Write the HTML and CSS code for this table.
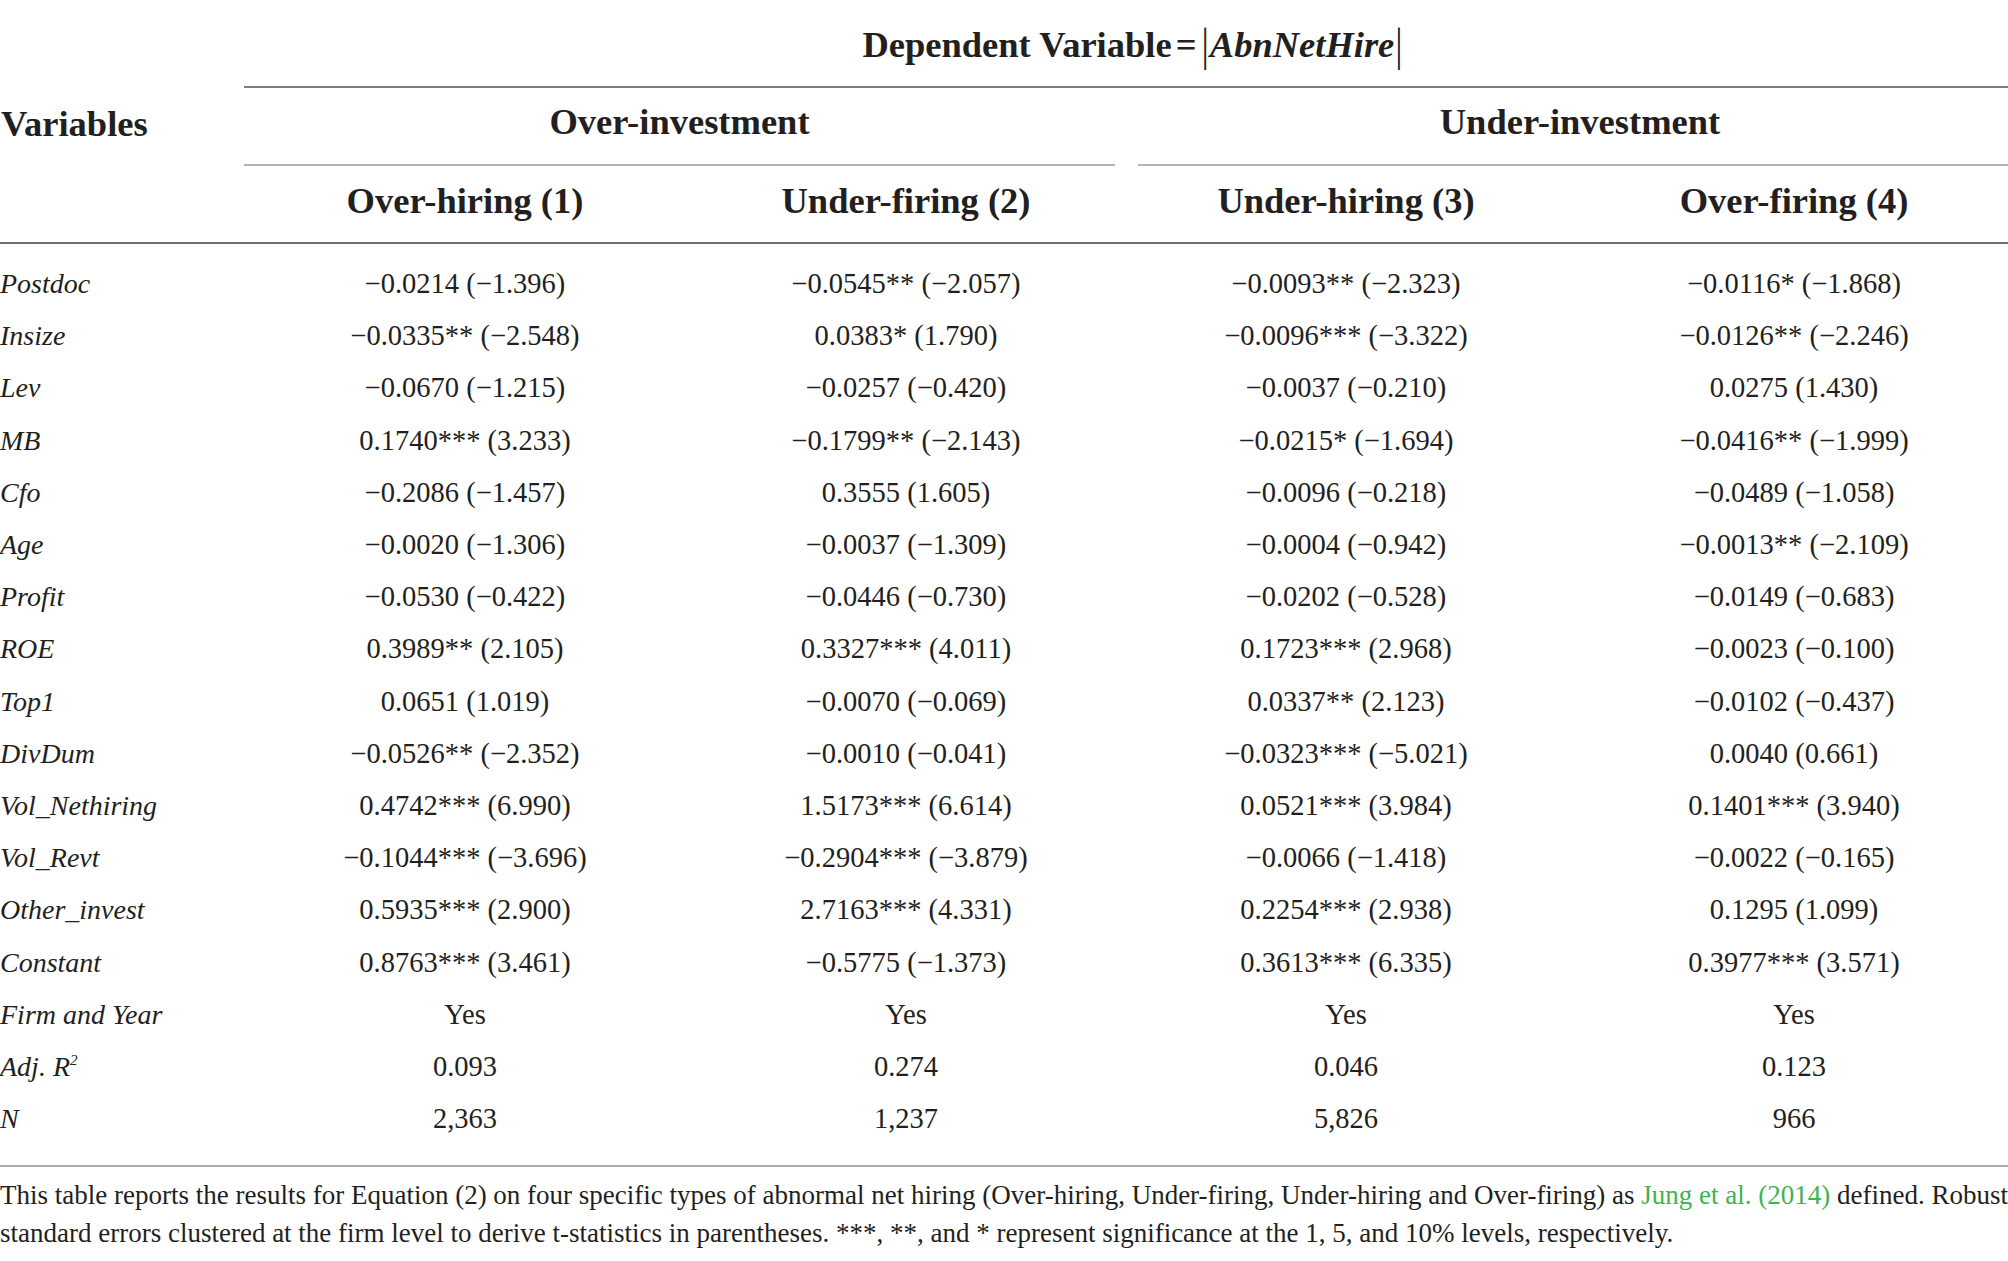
FILE: index.html
```html
<!DOCTYPE html>
<html lang="en">
<head>
<meta charset="utf-8">
<title>Table</title>
<link rel="stylesheet" href="styles.css">
</head>
<body>
<div class="page">
<table class="reg">
  <colgroup>
    <col class="c0"><col class="c1"><col class="c2"><col class="c3"><col class="c4">
  </colgroup>
  <thead>
    <tr>
      <th class="vars" rowspan="3">Variables</th>
      <th class="dep" colspan="4">Dependent Variable<span class="eq">=</span><span class="bar">|</span><em>AbnNetHire</em><span class="bar">|</span></th>
    </tr>
    <tr>
      <th class="grp-cell" colspan="2"><div class="grp grp-left">Over-investment</div></th>
      <th class="grp-cell" colspan="2"><div class="grp grp-right">Under-investment</div></th>
    </tr>
    <tr>
      <th class="sub">Over-hiring (1)</th>
      <th class="sub">Under-firing (2)</th>
      <th class="sub">Under-hiring (3)</th>
      <th class="sub">Over-firing (4)</th>
    </tr>
  </thead>
  <tbody>
    <tr><td class="lab">Postdoc</td><td>−0.0214 (−1.396)</td><td>−0.0545** (−2.057)</td><td>−0.0093** (−2.323)</td><td>−0.0116* (−1.868)</td></tr>
    <tr><td class="lab">Insize</td><td>−0.0335** (−2.548)</td><td>0.0383* (1.790)</td><td>−0.0096*** (−3.322)</td><td>−0.0126** (−2.246)</td></tr>
    <tr><td class="lab">Lev</td><td>−0.0670 (−1.215)</td><td>−0.0257 (−0.420)</td><td>−0.0037 (−0.210)</td><td>0.0275 (1.430)</td></tr>
    <tr><td class="lab">MB</td><td>0.1740*** (3.233)</td><td>−0.1799** (−2.143)</td><td>−0.0215* (−1.694)</td><td>−0.0416** (−1.999)</td></tr>
    <tr><td class="lab">Cfo</td><td>−0.2086 (−1.457)</td><td>0.3555 (1.605)</td><td>−0.0096 (−0.218)</td><td>−0.0489 (−1.058)</td></tr>
    <tr><td class="lab">Age</td><td>−0.0020 (−1.306)</td><td>−0.0037 (−1.309)</td><td>−0.0004 (−0.942)</td><td>−0.0013** (−2.109)</td></tr>
    <tr><td class="lab">Profit</td><td>−0.0530 (−0.422)</td><td>−0.0446 (−0.730)</td><td>−0.0202 (−0.528)</td><td>−0.0149 (−0.683)</td></tr>
    <tr><td class="lab">ROE</td><td>0.3989** (2.105)</td><td>0.3327*** (4.011)</td><td>0.1723*** (2.968)</td><td>−0.0023 (−0.100)</td></tr>
    <tr><td class="lab">Top1</td><td>0.0651 (1.019)</td><td>−0.0070 (−0.069)</td><td>0.0337** (2.123)</td><td>−0.0102 (−0.437)</td></tr>
    <tr><td class="lab">DivDum</td><td>−0.0526** (−2.352)</td><td>−0.0010 (−0.041)</td><td>−0.0323*** (−5.021)</td><td>0.0040 (0.661)</td></tr>
    <tr><td class="lab">Vol_Nethiring</td><td>0.4742*** (6.990)</td><td>1.5173*** (6.614)</td><td>0.0521*** (3.984)</td><td>0.1401*** (3.940)</td></tr>
    <tr><td class="lab">Vol_Revt</td><td>−0.1044*** (−3.696)</td><td>−0.2904*** (−3.879)</td><td>−0.0066 (−1.418)</td><td>−0.0022 (−0.165)</td></tr>
    <tr><td class="lab">Other_invest</td><td>0.5935*** (2.900)</td><td>2.7163*** (4.331)</td><td>0.2254*** (2.938)</td><td>0.1295 (1.099)</td></tr>
    <tr><td class="lab">Constant</td><td>0.8763*** (3.461)</td><td>−0.5775 (−1.373)</td><td>0.3613*** (6.335)</td><td>0.3977*** (3.571)</td></tr>
    <tr><td class="lab">Firm and Year</td><td>Yes</td><td>Yes</td><td>Yes</td><td>Yes</td></tr>
    <tr><td class="lab">Adj. R<sup>2</sup></td><td>0.093</td><td>0.274</td><td>0.046</td><td>0.123</td></tr>
    <tr><td class="lab">N</td><td>2,363</td><td>1,237</td><td>5,826</td><td>966</td></tr>
  </tbody>
</table>
<p class="note">This table reports the results for Equation (2) on four specific types of abnormal net hiring (Over-hiring, Under-firing, Under-hiring and Over-firing) as <a class="ref" href="#">Jung et al. (2014)</a> defined. Robust<br>standard errors clustered at the firm level to derive t-statistics in parentheses. ***, **, and * represent significance at the 1, 5, and 10% levels, respectively.</p>
</div>
</body>
</html>
```
FILE: styles.css
```css
html, body {
  margin: 0;
  padding: 0;
  background: #ffffff;
  overflow: hidden;
}
body {
  font-family: "Liberation Serif", "Times New Roman", serif;
  color: #231f20;
}
.page {
  width: 2008px;
}
.reg {
  width: 2022px;
  table-layout: fixed;
  border-collapse: separate;
  border-spacing: 0;
}
.c0 { width: 244px; }
.c1 { width: 442px; }
.c2 { width: 440px; }
.c3 { width: 440px; }
.c4 { width: 456px; }

th {
  font-weight: bold;
  font-size: 36.5px;
  padding: 0;
  text-align: center;
  white-space: nowrap;
}
.vars {
  text-align: left;
  vertical-align: middle;
  padding-left: 1px;
  padding-top: 4px;
  border-bottom: 2px solid #707070;
}
.dep {
  height: 82px;
  line-height: 82px;
  padding-top: 4px;
  border-bottom: 2px solid #7c7c7c;
}
.dep em {
  font-style: italic;
}
.eq {
  font-weight: bold;
  margin: 0 4px;
}
.bar {
  font-weight: normal;
  display: inline-block;
  transform: scaleY(1.25);
  margin: 0 1px;
}
.grp-cell {
  padding: 0;
}
.grp {
  line-height: 68px;
  padding-bottom: 8px;
  border-bottom: 2px solid #b4b4b4;
}
.grp-left { margin-right: 11px; }
.grp-right { margin-left: 12px; }
.sub {
  line-height: 70px;
  padding-bottom: 6px;
  border-bottom: 2px solid #707070;
}

td {
  font-size: 28.5px;
  line-height: 52.2px;
  padding: 0;
  text-align: center;
  vertical-align: middle;
  white-space: nowrap;
}
td.lab {
  text-align: left;
  font-style: italic;
  font-size: 28px;
}
tbody tr:first-child td {
  padding-top: 14px;
}
tbody tr:last-child td {
  padding-bottom: 20px;
  border-bottom: 2px solid #ababab;
}
sup {
  font-size: 15px;
  line-height: 0;
  vertical-align: 11px;
}
.note {
  margin: 0;
  padding-top: 9px;
  font-size: 27px;
  line-height: 38px;
  white-space: nowrap;
}
.ref {
  color: #3fb34f;
  text-decoration: none;
}
```
